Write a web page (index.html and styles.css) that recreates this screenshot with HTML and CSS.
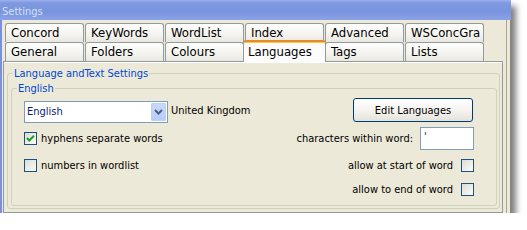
FILE: index.html
```html
<!DOCTYPE html>
<html lang="en">
<head>
    <meta charset="UTF-8">
    <title>Settings</title>
    <link rel="stylesheet" href="styles.css">
</head>
<body>
    <div class="window">
        <!-- Title bar -->
        <div class="titlebar">Settings</div>

        <div class="frame">
            <div class="main">
                <!-- Tabs -->
                <div class="tabs">
                    <div class="tab-row">
                        <span class="tab">Concord</span>
                        <span class="tab">KeyWords</span>
                        <span class="tab">WordList</span>
                        <span class="tab">Index</span>
                        <span class="tab">Advanced</span>
                        <span class="tab">WSConcGra</span>
                    </div>
                    <div class="tab-row">
                        <span class="tab">General</span>
                        <span class="tab">Folders</span>
                        <span class="tab">Colours</span>
                        <span class="tab active">Languages</span>
                        <span class="tab">Tags</span>
                        <span class="tab">Lists</span>
                    </div>
                </div>

                <!-- Tab page -->
                <div class="panel">
                    <fieldset class="group outer">
                        <legend>Language andText Settings</legend>
                        <fieldset class="group inner">
                            <legend>English</legend>
                            <div class="options">
                                <div class="cell">
                                    <div class="combo">
                                        <span class="combo-text">English</span>
                                        <span class="combo-btn">
                                            <svg width="15" height="18" viewBox="0 0 15 18">
                                                <polyline points="4,7 7.5,10.5 11,7" fill="none" stroke="#4d6185" stroke-width="2"/>
                                            </svg>
                                        </span>
                                    </div>
                                    <span class="country">United Kingdom</span>
                                </div>
                                <div class="cell right">
                                    <button class="btn">Edit Languages</button>
                                </div>

                                <div class="cell">
                                    <span class="check">
                                        <svg width="11" height="11" viewBox="0 0 11 11">
                                            <polyline points="2,5 4.3,7.5 9,2.8" fill="none" stroke="#21a121" stroke-width="2"/>
                                        </svg>
                                    </span>
                                    <span class="label">hyphens separate words</span>
                                </div>
                                <div class="cell right">
                                    <span>characters within word:</span>
                                    <span class="textbox">'</span>
                                </div>

                                <div class="cell">
                                    <span class="check"></span>
                                    <span class="label">numbers in wordlist</span>
                                </div>
                                <div class="cell right">
                                    <span>allow at start of word</span>
                                    <span class="check"></span>
                                </div>

                                <div class="cell"></div>
                                <div class="cell right">
                                    <span>allow to end of word</span>
                                    <span class="check"></span>
                                </div>
                            </div>
                        </fieldset>
                    </fieldset>
                </div>
            </div>
            <div class="edge"></div>
        </div>
    </div>
</body>
</html>
```

FILE: styles.css
```css
body {
    margin: 0;
    background: #fff;
    font-family: "DejaVu Sans Condensed", "Liberation Sans", Arial, sans-serif;
    font-size: 11px;
    color: #000;
}

/* Window */
.window {
    width: 511px;
    height: 213px;
    display: flex;
    flex-direction: column;
    overflow: hidden;
    box-shadow: 5px 6px 6px rgba(0, 0, 0, 0.5);
}

.titlebar {
    height: 20px;
    box-sizing: border-box;
    padding: 4px 0 0 2px;
    line-height: 16px;
    color: #d6e0f5;
    background: linear-gradient(#9db1ea 0, #7e99e0 3px, #7a95df 60%, #8ba3e5 100%);
}

.frame {
    flex: 1;
    display: flex;
    background: #ece9d8;
    border-left: 2px solid #7c8fda;
}

.main {
    width: 501px;
    box-sizing: border-box;
    padding: 3px 0 0 1px;
    display: flex;
    flex-direction: column;
}

.edge {
    width: 8px;
    background: linear-gradient(to right, transparent 3px, #a6a595 3px, #a6a595 4px, transparent 4px, transparent 7px, #85837a 7px);
}

/* Tabs */
.tabs {
    margin-left: 2px;
}

.tab-row {
    display: flex;
    gap: 1px;
}

.tab {
    width: 79px;
    height: 19px;
    box-sizing: border-box;
    padding-left: 5px;
    border: 1px solid #919b9c;
    border-bottom: none;
    border-radius: 3px 3px 0 0;
    background: linear-gradient(#fefefd, #f4f3ee 60%, #e7e6df);
    font-size: 13px;
    line-height: 18px;
}

.tab.active {
    position: relative;
    z-index: 1;
    width: 83px;
    height: 22px;
    margin: -2px -2px -1px -2px;
    padding: 1px 0 0 4px;
    border-top: 2px solid #e68b2c;
    box-shadow: inset 0 1px #ffc73c;
    background: #fcfcfe;
}

/* Tab page */
.panel {
    flex: 1;
    border: 1px solid #919b9c;
    padding: 5px 2px 0 3px;
    box-shadow: inset 0 1px #fff;
}

.group {
    margin: 0;
    min-width: 0;
    border: 1px solid #d0d0bf;
    border-radius: 3px;
}

.group legend {
    padding: 0 1px;
    line-height: 13px;
    color: #0046d5;
}

.outer {
    padding: 2px 2px 2px 3px;
}

.outer legend {
    margin-left: 2px;
}

.inner {
    padding: 1px 22px 5px 3px;
}

.options {
    display: grid;
    grid-template-columns: 1fr auto;
    grid-template-rows: 28px 28px 26px 22px;
    align-items: center;
    margin-left: 9px;
}

.cell {
    display: flex;
    align-items: center;
}

.cell.right {
    justify-content: flex-end;
    gap: 7px;
}

/* Controls */
.combo {
    width: 144px;
    height: 22px;
    box-sizing: border-box;
    margin-top: 3px;
    display: flex;
    border: 1px solid #7f9db9;
    background: #fff;
}

.combo-text {
    flex: 1;
    padding-left: 2px;
    line-height: 20px;
    color: #0c1a6b;
}

.combo-btn {
    width: 15px;
    height: 18px;
    margin: 1px;
    border-radius: 2px;
    background: linear-gradient(#cbdafc, #b6cbf9);
    box-shadow: inset 0 0 0 1px #bccffa;
}

.combo-btn svg {
    display: block;
}

.country {
    margin-left: 3px;
}

.check {
    width: 13px;
    height: 13px;
    box-sizing: border-box;
    border: 1px solid #1c5180;
    background: linear-gradient(135deg, #dcdcd7, #fbfbf9);
    flex: none;
}

.check svg {
    display: block;
}

.cell .label {
    margin-left: 4px;
}

.cell.right .check {
    margin-left: 1px;
}

.textbox {
    width: 54px;
    height: 23px;
    box-sizing: border-box;
    border: 1px solid #7f9db9;
    background: #fff;
    padding: 2px 0 0 3px;
    line-height: 13px;
    color: #0c1a6b;
}

.btn {
    width: 120px;
    height: 24px;
    margin-right: 1px;
    border: 1px solid #003c74;
    border-radius: 3px;
    background: linear-gradient(#fff, #f4f3ef 55%, #e3e2da);
    font-family: "DejaVu Sans Condensed", "Liberation Sans", Arial, sans-serif;
    font-size: 11px;
    color: #000;
    padding: 0;
}
```
